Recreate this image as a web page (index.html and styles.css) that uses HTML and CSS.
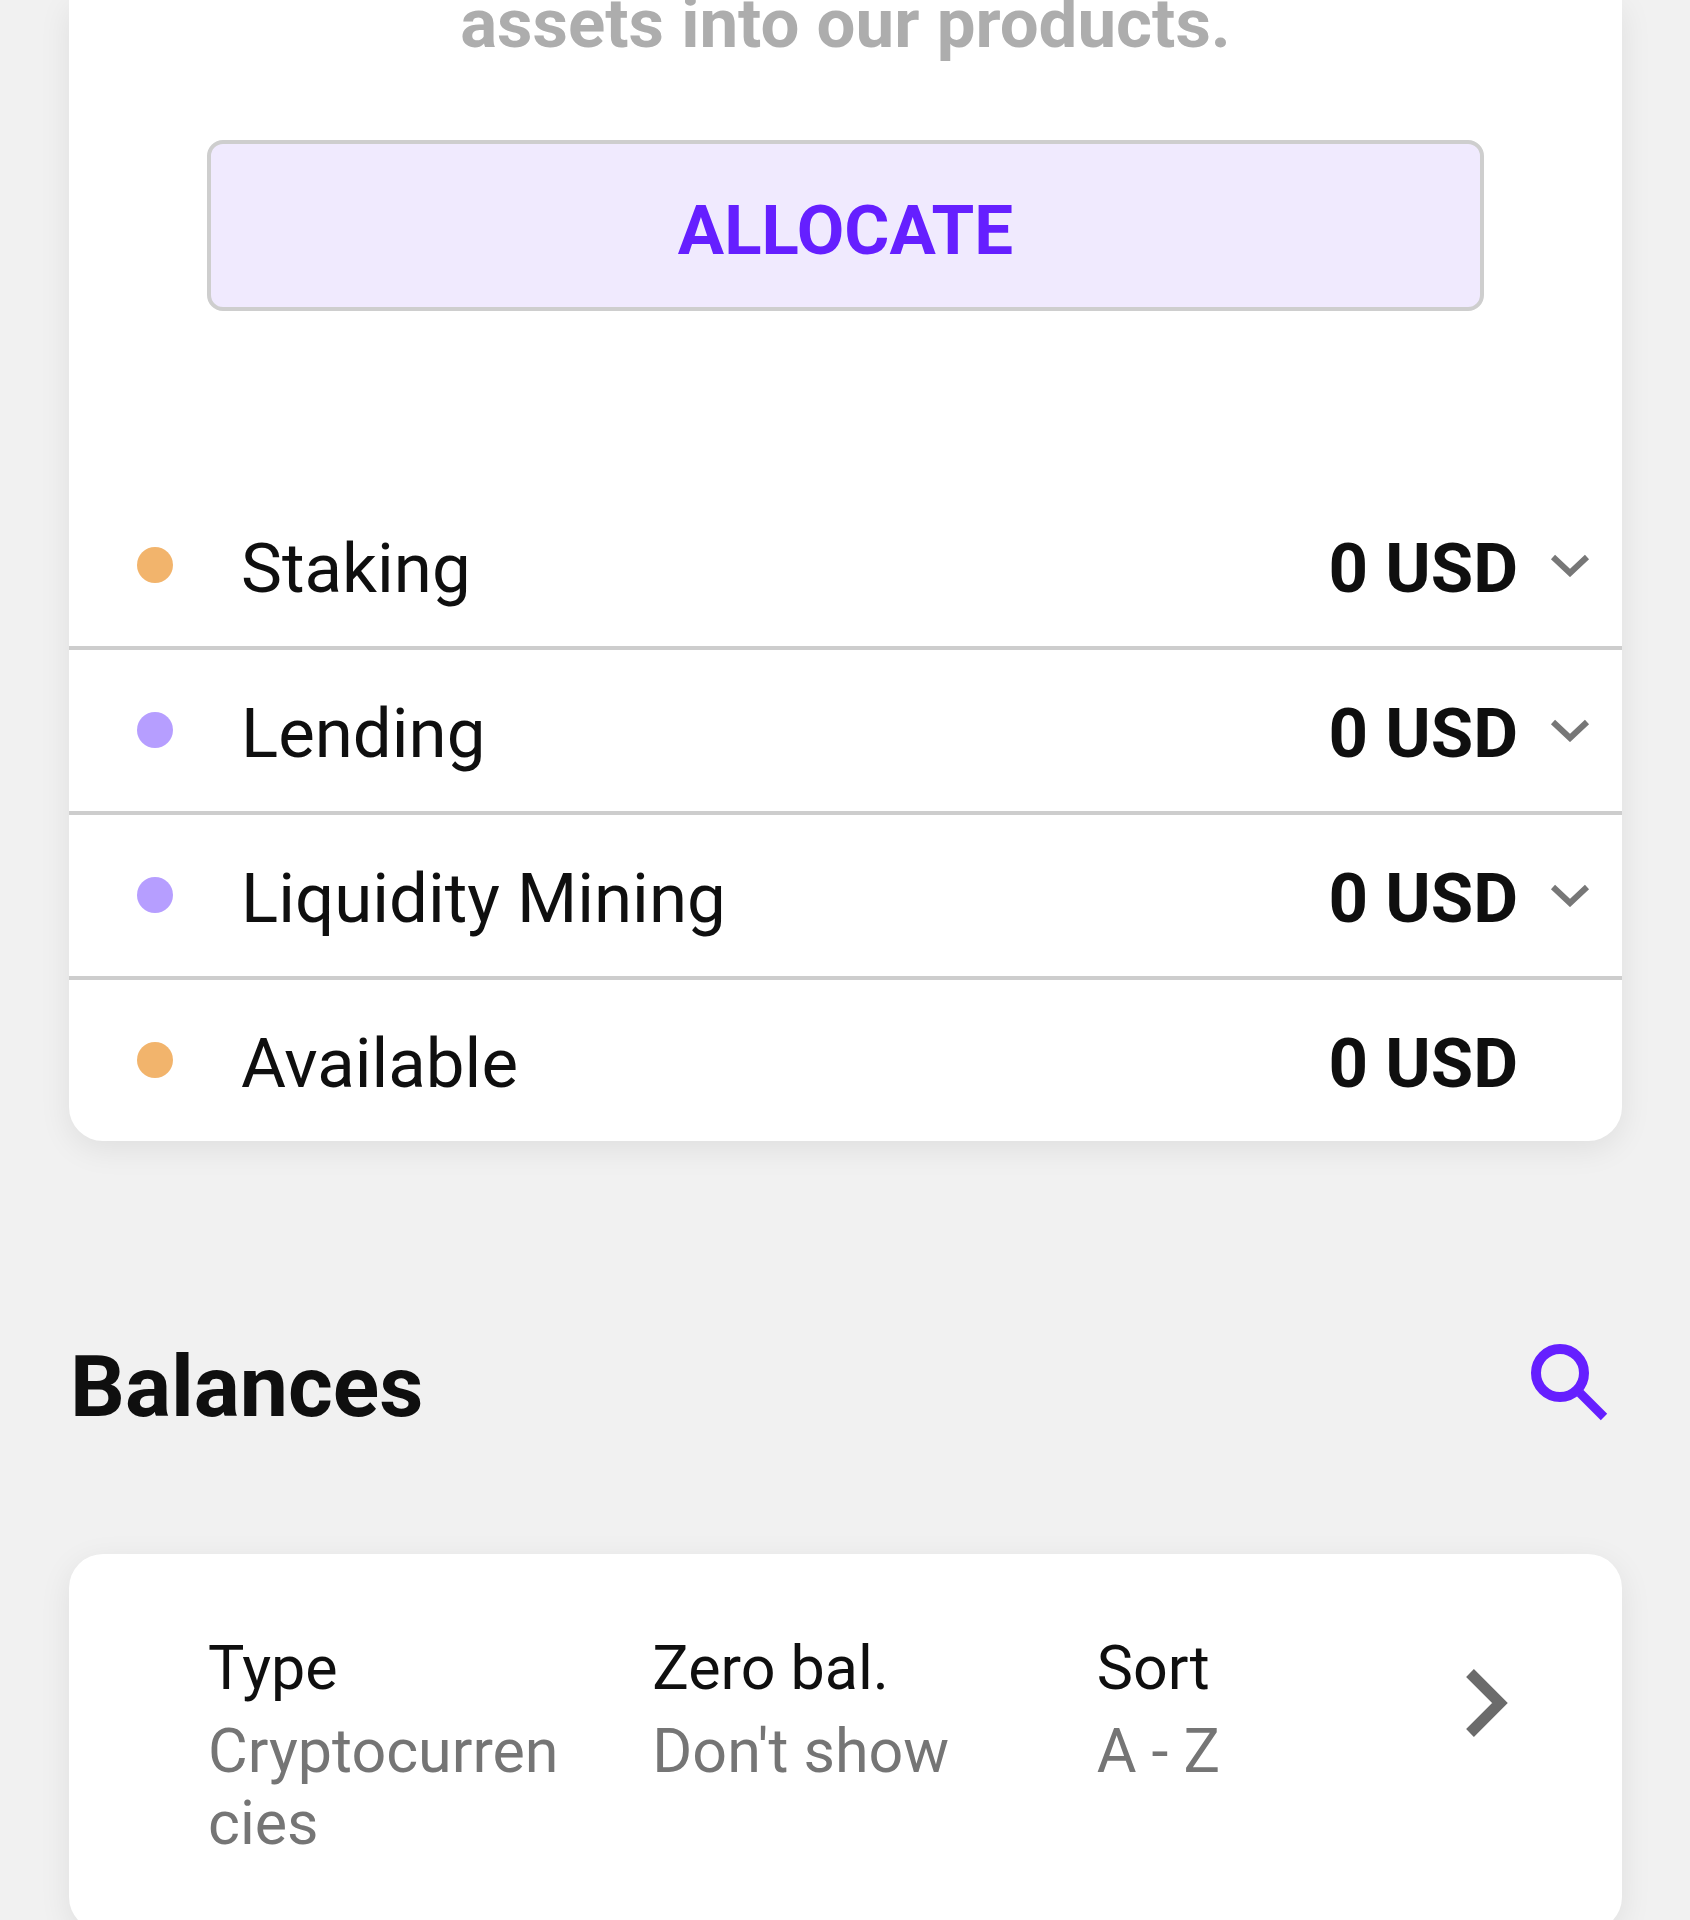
FILE: index.html
```
<!DOCTYPE html>
<html lang="en">
<head>
    <meta charset="UTF-8">
    <meta name="viewport" content="width=device-width, initial-scale=1.0">
    <title>Balances</title>
    <link rel="stylesheet" href="styles.css">
</head>
<body>
  <main class="wrapper">
    <section class="card allocation">
        <p class="intro">assets into our products.</p>
        <button class="allocate-btn" type="button">ALLOCATE</button>

        <ul class="products">
            <li class="product">
                <span class="dot orange"></span>
                <span class="name">Staking</span>
                <span class="amount">0 USD</span>
                <button class="icon-btn" type="button" aria-label="Show staking">
                    <svg width="40" height="24" viewBox="0 0 40 24"><path d="M3 4 L20 20 L37 4" fill="none" stroke="#777" stroke-width="6"/></svg>
                </button>
            </li>
            <li class="product">
                <span class="dot purple"></span>
                <span class="name">Lending</span>
                <span class="amount">0 USD</span>
                <button class="icon-btn" type="button" aria-label="Show lending">
                    <svg width="40" height="24" viewBox="0 0 40 24"><path d="M3 4 L20 20 L37 4" fill="none" stroke="#777" stroke-width="6"/></svg>
                </button>
            </li>
            <li class="product">
                <span class="dot purple"></span>
                <span class="name">Liquidity Mining</span>
                <span class="amount">0 USD</span>
                <button class="icon-btn" type="button" aria-label="Show liquidity mining">
                    <svg width="40" height="24" viewBox="0 0 40 24"><path d="M3 4 L20 20 L37 4" fill="none" stroke="#777" stroke-width="6"/></svg>
                </button>
            </li>
            <li class="product">
                <span class="dot orange"></span>
                <span class="name">Available</span>
                <span class="amount">0 USD</span>
            </li>
        </ul>
    </section>

    <header class="balances-header">
        <h2>Balances</h2>
        <button class="icon-btn search-btn" type="button" aria-label="Search">
            <svg width="80" height="80" viewBox="0 0 80 80" fill="none" stroke="#651fff">
                <circle cx="31" cy="31" r="24" stroke-width="10"/>
                <path d="M51 51 L75 75" stroke-width="9"/>
            </svg>
        </button>
    </header>

    <section class="card filter-card">
        <dl class="filters">
            <div>
                <dt>Type</dt>
                <dd>Cryptocurrencies</dd>
            </div>
            <div>
                <dt>Zero bal.</dt>
                <dd>Don't show</dd>
            </div>
            <div>
                <dt>Sort</dt>
                <dd>A - Z</dd>
            </div>
        </dl>
        <button class="icon-btn filter-btn" type="button" aria-label="Edit filters">
            <svg width="44" height="70" viewBox="0 0 44 70"><path d="M5 5 L35 35 L5 65" fill="none" stroke="#6b6b6b" stroke-width="11"/></svg>
        </button>
    </section>
  </main>
</body>
</html>
```
FILE: styles.css
```
* {
    box-sizing: border-box;
}

body {
    margin: 0;
    background-color: #f1f1f1;
    color: #0f0f0f;
    font-family: Roboto, "Liberation Sans", sans-serif;
    font-size: 69px;
}

.wrapper {
    height: 100vh;
    overflow: hidden;
    padding: 0 68px 0 69px;
}

.card {
    background-color: white;
    border-radius: 34px;
    box-shadow: 0 8px 32px rgba(0, 0, 0, 0.08);
}

.allocation {
    display: flex;
    flex-direction: column;
    border-radius: 0 0 34px 34px;
}

.intro {
    margin: 0 0 92px;
    color: #adadad;
    font-weight: bold;
    line-height: 48px;
    text-align: center;
}

button {
    font-family: inherit;
    cursor: pointer;
}

.allocate-btn {
    margin: 0 138px;
    padding: 48px 20px 37px;
    border: 4px solid #cecece;
    border-radius: 16px;
    background-color: #f0eafe;
    color: #651fff;
    font-size: 69px;
    font-weight: bold;
    line-height: 78px;
}

.products {
    margin: 174px 0 0;
    padding: 0;
    list-style: none;
}

.product {
    display: grid;
    grid-template-columns: 36px 1fr auto 104px;
    align-items: center;
    padding: 35px 0 36px 68px;
    border-bottom: 4px solid #cdcdcd;
    line-height: 82px;
}

.product:last-child {
    border-bottom: none;
}

.dot {
    width: 36px;
    height: 36px;
    border-radius: 50%;
}

.orange {
    background-color: #f2b46c;
}

.purple {
    background-color: #b69eff;
}

.name {
    padding: 8px 0 0 68px;
}

.amount {
    padding-top: 8px;
    font-weight: bold;
}

.icon-btn {
    display: flex;
    align-items: center;
    justify-content: center;
    padding: 0;
    border: none;
    background: none;
}

.balances-header {
    display: flex;
    align-items: center;
    justify-content: space-between;
    margin: 198px 0 119px;
    padding: 0 13px 0 1px;
}

h2 {
    margin: 0;
    font-size: 86px;
    line-height: 96px;
}

.search-btn {
    padding-bottom: 10px;
}

.filter-card {
    display: flex;
    align-items: flex-start;
    padding: 78px 99px 72px 139px;
}

.filters {
    display: grid;
    grid-template-columns: repeat(3, 1fr);
    gap: 90px;
    flex: 1;
    margin: 0;
    font-size: 61px;
    line-height: 72px;
}

dt {
    margin-bottom: 11px;
}

dd {
    margin: 0;
    color: #757575;
    word-break: break-all;
}

.filter-btn {
    width: 72px;
    padding-top: 36px;
}
```
